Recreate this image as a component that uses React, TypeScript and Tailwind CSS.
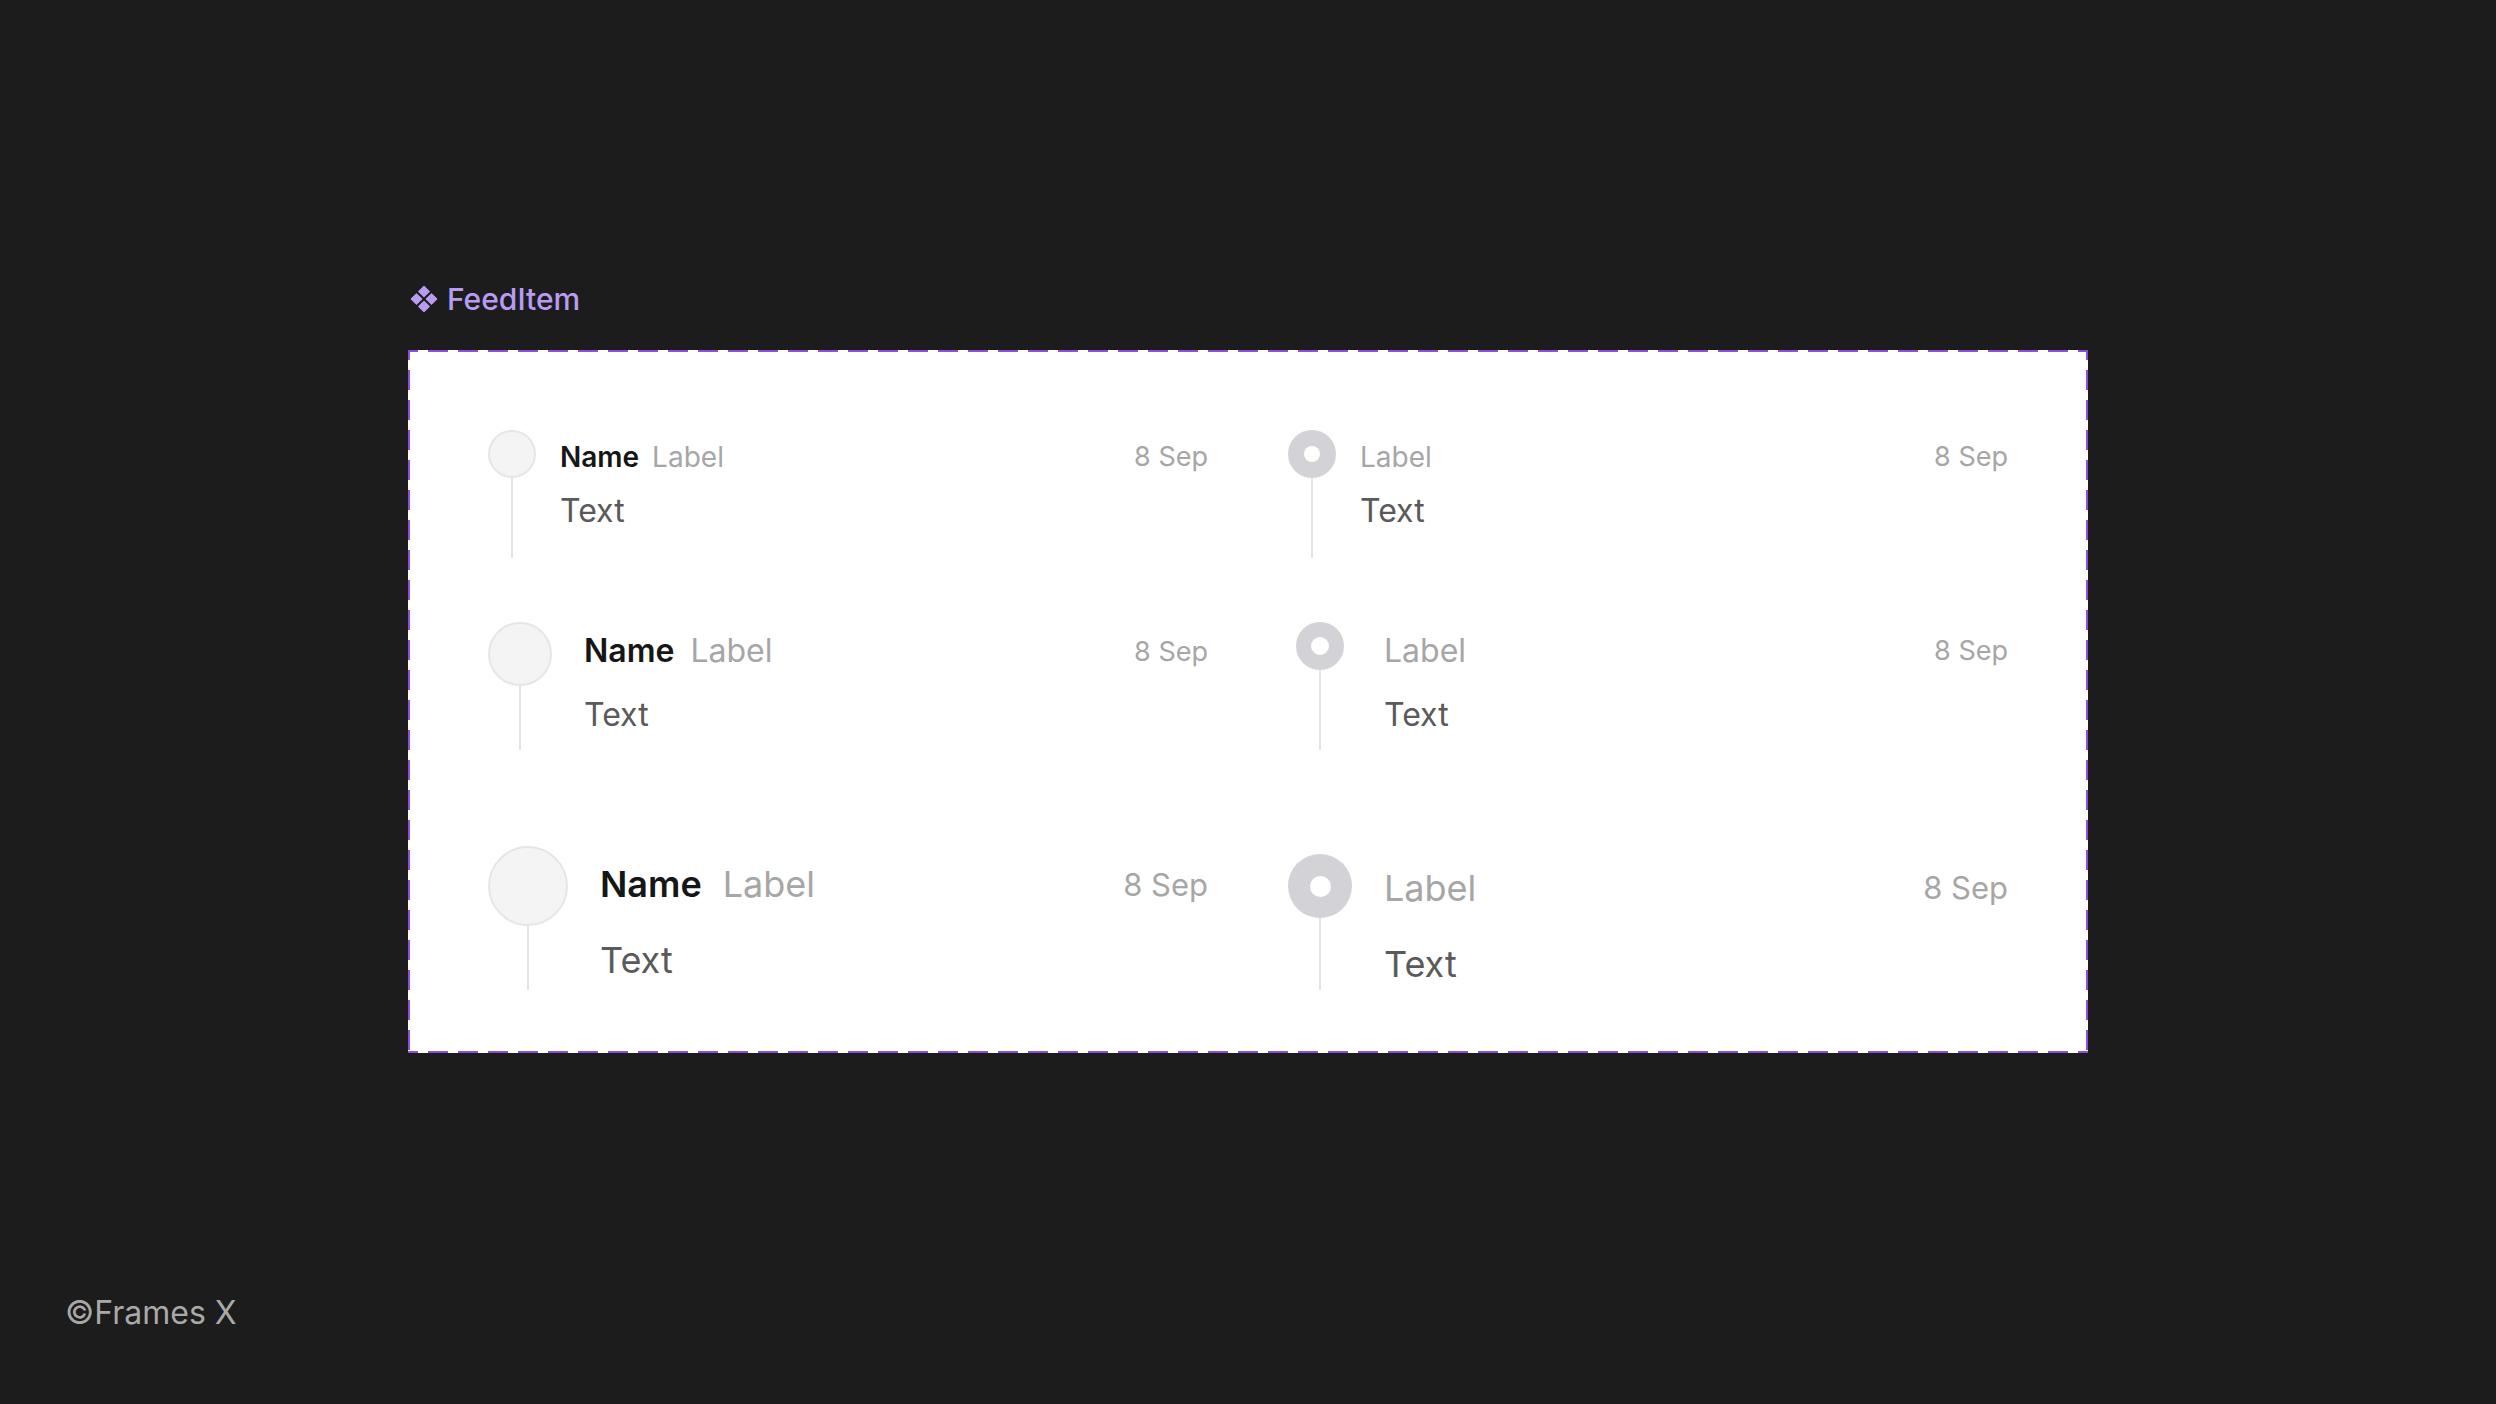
import React from "react";

type Size = "sm" | "md" | "lg";

function Diamond({ cx, cy, r }: { cx: number; cy: number; r: number }) {
  return <path d={`M${cx} ${cy - r} L${cx + r} ${cy} L${cx} ${cy + r} L${cx - r} ${cy} Z`} fill="#b89cf2" strokeLinejoin="round" stroke="#b89cf2" strokeWidth={1.2} />;
}

function ComponentIcon() {
  return (
    <svg width="28" height="28" viewBox="0 0 28 28">
      <Diamond cx={14} cy={6.5} r={5.2} />
      <Diamond cx={6.5} cy={14} r={5.2} />
      <Diamond cx={21.5} cy={14} r={5.2} />
      <Diamond cx={14} cy={21.5} r={5.2} />
    </svg>
  );
}

function LeftItem({ size }: { size: Size }) {
  if (size === "sm") {
    return (
      <div className="flex h-[128px]">
        <div className="flex w-[48px] flex-col items-center">
          <div className="h-[48px] w-[48px] shrink-0 rounded-full border-2 border-[#e6e6e9] bg-[#f4f4f5]" />
          <div className="w-[2px] flex-1 bg-[#e4e4e4]" />
        </div>
        <div className="ml-[24px] flex flex-1 flex-col">
          <div className="flex h-[53px] items-center justify-between">
            <div className="flex items-center gap-[13px] text-[28px] leading-none">
              <span className="font-semibold text-[#161616]">Name</span>
              <span className="text-[#a6a6a6]">Label</span>
            </div>
            <span className="text-[27px] leading-none text-[#a6a6a6]">8 Sep</span>
          </div>
          <div className="mt-[8px] text-[32px] leading-[40px] text-[#5a5a5a]">Text</div>
        </div>
      </div>
    );
  }
  if (size === "md") {
    return (
      <div className="flex h-[128px]">
        <div className="flex w-[64px] flex-col items-center">
          <div className="h-[64px] w-[64px] shrink-0 rounded-full border-2 border-[#e6e6e9] bg-[#f4f4f5]" />
          <div className="w-[2px] flex-1 bg-[#e4e4e4]" />
        </div>
        <div className="ml-[32px] flex flex-1 flex-col">
          <div className="flex h-[58px] items-center justify-between">
            <div className="flex items-center gap-[16px] text-[32px] leading-none">
              <span className="font-semibold text-[#161616]">Name</span>
              <span className="text-[#a6a6a6]">Label</span>
            </div>
            <span className="text-[27px] leading-none text-[#a6a6a6]">8 Sep</span>
          </div>
          <div className="mt-[15px] text-[32px] leading-[40px] text-[#5a5a5a]">Text</div>
        </div>
      </div>
    );
  }
  return (
    <div className="flex h-[144px]">
      <div className="flex w-[80px] flex-col items-center">
        <div className="h-[80px] w-[80px] shrink-0 rounded-full border-2 border-[#e6e6e9] bg-[#f4f4f5]" />
        <div className="w-[2px] flex-1 bg-[#e4e4e4]" />
      </div>
      <div className="ml-[32px] flex flex-1 flex-col">
        <div className="flex h-[76px] items-center justify-between">
          <div className="flex items-center gap-[21px] text-[36px] leading-none">
            <span className="font-semibold text-[#161616]">Name</span>
            <span className="text-[#a6a6a6]">Label</span>
          </div>
          <span className="text-[31px] leading-none text-[#a6a6a6]">8 Sep</span>
        </div>
        <div className="mt-[18px] text-[36px] leading-[40px] text-[#5a5a5a]">Text</div>
      </div>
    </div>
  );
}

function RightItem({ size }: { size: Size }) {
  if (size === "sm") {
    return (
      <div className="flex h-[128px]">
        <div className="flex w-[48px] flex-col items-center">
          <div className="flex h-[48px] w-[48px] shrink-0 items-center justify-center rounded-full bg-[#d3d3d7]">
            <div className="h-[16px] w-[16px] rounded-full bg-white" />
          </div>
          <div className="w-[2px] flex-1 bg-[#e4e4e4]" />
        </div>
        <div className="ml-[24px] flex flex-1 flex-col">
          <div className="flex h-[53px] items-center justify-between">
            <span className="text-[28px] leading-none text-[#a6a6a6]">Label</span>
            <span className="text-[27px] leading-none text-[#a6a6a6]">8 Sep</span>
          </div>
          <div className="mt-[8px] text-[32px] leading-[40px] text-[#5a5a5a]">Text</div>
        </div>
      </div>
    );
  }
  if (size === "md") {
    return (
      <div className="flex h-[128px]">
        <div className="flex w-[64px] flex-col items-center">
          <div className="flex h-[48px] w-[48px] shrink-0 items-center justify-center rounded-full bg-[#d3d3d7]">
            <div className="h-[18px] w-[18px] rounded-full bg-white" />
          </div>
          <div className="w-[2px] flex-1 bg-[#e4e4e4]" />
        </div>
        <div className="ml-[32px] flex flex-1 flex-col">
          <div className="flex h-[57px] items-center justify-between">
            <span className="text-[32px] leading-none text-[#a6a6a6]">Label</span>
            <span className="text-[27px] leading-none text-[#a6a6a6]">8 Sep</span>
          </div>
          <div className="mt-[16px] text-[32px] leading-[40px] text-[#5a5a5a]">Text</div>
        </div>
      </div>
    );
  }
  return (
    <div className="mt-[8px] flex h-[136px]">
      <div className="flex w-[64px] flex-col items-center">
        <div className="flex h-[64px] w-[64px] shrink-0 items-center justify-center rounded-full bg-[#d3d3d7]">
          <div className="h-[21px] w-[21px] rounded-full bg-white" />
        </div>
        <div className="w-[2px] flex-1 bg-[#e4e4e4]" />
      </div>
      <div className="ml-[32px] flex flex-1 flex-col">
        <div className="flex h-[67px] items-center justify-between">
          <span className="text-[36px] leading-none text-[#a6a6a6]">Label</span>
          <span className="text-[31px] leading-none text-[#a6a6a6]">8 Sep</span>
        </div>
        <div className="mt-[23px] text-[36px] leading-[40px] text-[#5a5a5a]">Text</div>
      </div>
    </div>
  );
}

export default function App() {
  return (
    <div className="flex h-[1404px] w-[2496px] flex-col bg-[#1c1c1c] pl-[65px] font-['Inter',sans-serif]">
      <div className="ml-[345px] mt-[279px] flex h-[40px] items-center gap-[9px]">
        <ComponentIcon />
        <span className="text-[30px] font-medium leading-none text-[#b89cf2]">FeedItem</span>
      </div>

      <div className="relative ml-[343px] mt-[31px] w-[1680px] bg-white px-[80px] pb-[63px] pt-[80px]">
        <div className="pointer-events-none absolute left-0 top-0 h-[2px] w-full bg-[repeating-linear-gradient(90deg,#8b4fdc_0_10px,transparent_10px_20px,#8b4fdc_20px_30px)]" />
        <div className="pointer-events-none absolute bottom-0 left-0 h-[2px] w-full bg-[repeating-linear-gradient(90deg,#8b4fdc_0_10px,transparent_10px_20px,#8b4fdc_20px_30px)]" />
        <div className="pointer-events-none absolute left-0 top-0 h-full w-[2px] bg-[repeating-linear-gradient(180deg,#8b4fdc_0_10px,transparent_10px_20px,#8b4fdc_20px_30px)]" />
        <div className="pointer-events-none absolute right-0 top-0 h-full w-[2px] bg-[repeating-linear-gradient(180deg,#8b4fdc_0_10px,transparent_10px_20px,#8b4fdc_20px_30px)]" />

        <div className="grid grid-cols-[720px_720px] gap-x-[80px]">
          <LeftItem size="sm" />
          <RightItem size="sm" />
        </div>
        <div className="mt-[64px] grid grid-cols-[720px_720px] gap-x-[80px]">
          <LeftItem size="md" />
          <RightItem size="md" />
        </div>
        <div className="mt-[96px] grid grid-cols-[720px_720px] gap-x-[80px]">
          <LeftItem size="lg" />
          <RightItem size="lg" />
        </div>
      </div>

      <div className="mt-[240px] text-[32px] leading-[40px] text-[#a9a9a9]">©Frames X</div>
    </div>
  );
}
